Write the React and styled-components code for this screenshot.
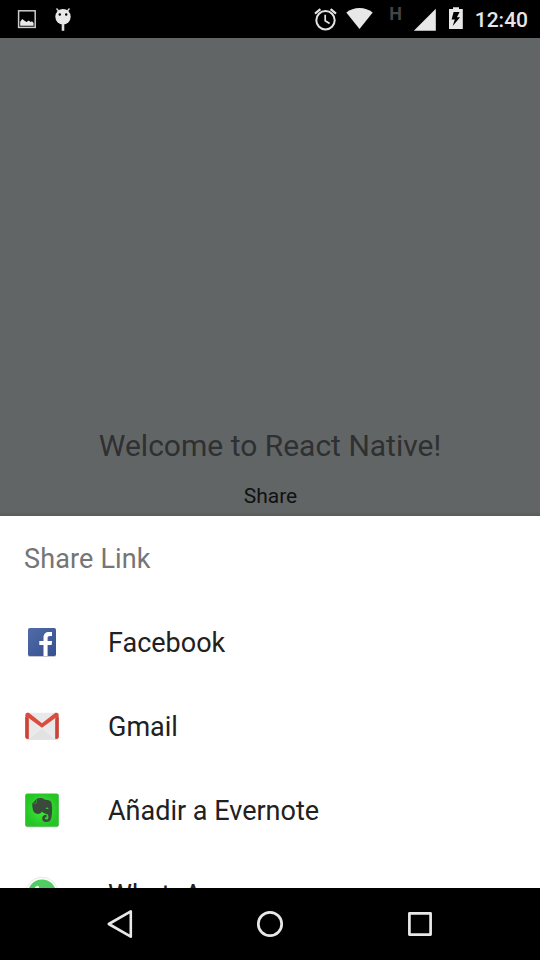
import React from "react";
import styled, { createGlobalStyle } from "styled-components";

const GlobalStyle = createGlobalStyle`
  * { box-sizing: border-box; }
  body { margin: 0; background: #000; font-family: Roboto, sans-serif; }
  svg { display: block; flex: none; }
`;

const Screen = styled.div`
  display: flex;
  flex-direction: column;
  width: 540px;
  height: 960px;
  overflow: hidden;
  background: #626566;
`;

const StatusBar = styled.header`
  display: flex;
  flex: none;
  justify-content: space-between;
  height: 38px;
  padding: 0 12px 0 15px;
  background: #000;
`;

const StatusGroup = styled.div`
  display: flex;
  align-items: center;
  gap: ${(p) => p.$gap}px;
`;

const Clock = styled.time`
  color: #e6e6e6;
  font-size: 21px;
  font-weight: 500;
  line-height: 38px;
  margin-left: 4px;
  padding-top: 2px;
`;

const Network = styled.span`
  align-self: flex-start;
  width: 24px;
  margin-right: -4px;
  margin-left: 4px;
  padding: 4px 4px 0 0;
  text-align: center;
  color: #444;
  font-size: 18px;
  font-weight: 700;
  line-height: 20px;
`;

const Content = styled.main`
  display: flex;
  flex-direction: column;
  flex: none;
  align-items: center;
  justify-content: flex-end;
  height: 478px;
  background: linear-gradient(#626566 474px, #585b5c 478px);
`;

const Title = styled.h1`
  margin: 0 0 20px;
  color: #2e3031;
  font-size: 30px;
  font-weight: 400;
  line-height: 36px;
`;

const ShareAction = styled.div`
  margin-bottom: 7px;
  padding-left: 1px;
  color: #101111;
  font-size: 21px;
  line-height: 25px;
`;

const Sheet = styled.section`
  flex: none;
  height: 372px;
  overflow: hidden;
  background: #fff;
`;

const SheetTitle = styled.h2`
  height: 84px;
  margin: 0;
  padding-left: 24px;
  color: #757575;
  font-size: 27px;
  font-weight: 400;
  letter-spacing: 0.15px;
  line-height: 86px;
`;

const Target = styled.div`
  display: flex;
  align-items: center;
  gap: 48px;
  height: 84px;
  padding-left: 24px;
`;

const TargetName = styled.span`
  color: #212121;
  font-size: 27px;
  line-height: 34px;
  padding-top: 1px;
`;

const NavBar = styled.nav`
  display: flex;
  flex: none;
  align-items: center;
  justify-content: center;
  gap: 114px;
  height: 72px;
  background: #000;
`;

const PictureIcon = () => (
  <svg width="24" height="38" viewBox="15 0 24 38">
    <rect x="18.6" y="10.8" width="16.6" height="16.6" fill="none" stroke="#ccc" strokeWidth="1.5" />
    <path d="M20.2 25.7v-4l2-2.7 2.4 1.8 1.8 1.2 2.4-1.6 1.8 1.6 1.4-.8 1.6 1.8v2.7z" fill="#e8e8e8" />
  </svg>
);

const DebugIcon = () => (
  <svg width="20" height="38" viewBox="53 0 20 38">
    <path d="M56.5 8.5l3 3.5M69.5 8.5l-3 3.5" stroke="#ddd" strokeWidth="1.4" />
    <circle cx="63" cy="16.8" r="7.7" fill="#e8e8e8" />
    <path d="M63 24v6.8" stroke="#ddd" strokeWidth="2.6" />
    <circle cx="59.8" cy="14.5" r="1.2" />
    <circle cx="66.2" cy="14.5" r="1.2" />
  </svg>
);

const AlarmIcon = () => (
  <svg width="26" height="38" viewBox="312 0 26 38" fill="none" stroke="#e4e4e4">
    <circle cx="325.5" cy="20.2" r="9.2" strokeWidth="2" />
    <path d="M325.2 14.8v6l4.4 2.7" strokeWidth="1.7" />
    <path d="M315 13.6l5.4-4.4M336 13.6l-5.4-4.4" strokeWidth="2.2" />
  </svg>
);

const WifiIcon = () => (
  <svg width="30" height="38" viewBox="345 0 30 38">
    <path d="M346.3 12.6Q352 8 359.5 8t13.2 4.6L359.5 29z" fill="#e8e8e8" />
  </svg>
);

const SignalIcon = () => (
  <svg width="28" height="38" viewBox="413 0 28 38">
    <path d="M435.8 8.7v22.1h-22z" fill="#e8e8e8" />
  </svg>
);

const BatteryIcon = () => (
  <svg width="16" height="38" viewBox="448 0 16 38">
    <path d="M453 9V7.2h6V9h3.8v20H449V9z" fill="#e8e8e8" />
    <path d="M459.6 12h-6l-2 7.4h3.2l-2.1 6.6 7.4-8.7h-3.2z" />
  </svg>
);

const FacebookIcon = () => (
  <svg width="36" height="36" viewBox="0 0 36 36">
    <defs>
      <linearGradient id="facebookBlue" x1="0" y1="0" x2="1" y2="1">
        <stop stopColor="#506ca8" />
        <stop offset="1" stopColor="#37508f" />
      </linearGradient>
    </defs>
    <rect x="4" y="5" width="28" height="28" rx="1.8" fill="#c7c9cf" />
    <rect x="4" y="4" width="28" height="28" rx="1.8" fill="url(#facebookBlue)" />
    <path d="M19.5 32V21h-4.2v-4h4.2v-3.2c0-3.9 2.1-5.8 5.5-5.8h3v3.9h-2c-1.9 0-2.4.8-2.4 2.4V17h4.5l-.5 4h-4v11z" fill="#fff" />
  </svg>
);

const GmailIcon = () => (
  <svg width="36" height="36" viewBox="0 0 36 36">
    <rect x="1.6" y="5.4" width="33" height="26" rx="1.8" fill="#c9c9c9" />
    <rect x="1.6" y="4.8" width="33" height="26" rx="1.8" fill="#e9e9e9" />
    <path d="M5 30.8l13-11 13 11z" fill="#e2e2e2" />
    <path d="M18 19.8L5 30.8M18 19.8l13 11" stroke="#f0f0f0" strokeWidth=".7" />
    <path d="M1.4 6.8q0-2 2-2h1.4L18 15.2 31.4 4.8h1.2q2 0 2 2v22q0 2-2 2h-1.2V10L18 19.8 4.6 10v20.8H3.4q-2 0-2-2z" fill="#db4b3f" />
    <path d="M1.4 9v20q0 1.8 2 1.8h1.2V11zM34.6 9v20q0 1.8-2 1.8h-1.2V11z" fill="#cb4338" />
  </svg>
);

const EvernoteIcon = () => (
  <svg width="36" height="36" viewBox="0 0 36 36">
    <defs>
      <radialGradient id="evernoteGreen">
        <stop stopColor="#40ed38" />
        <stop offset="1" stopColor="#25c526" />
      </radialGradient>
    </defs>
    <rect x="1.3" y="2" width="33.4" height="33.2" rx="2" fill="#aabdac" />
    <rect x="1.3" y="1.5" width="33.4" height="33" rx="2" fill="url(#evernoteGreen)" />
    <path d="M8.2 11.4L12.8 6.7q2-1 4.6-.7 2.2.2 3 1.5l4.3.7q2.5.5 2.9 3.2.8 4.4.4 9.2-.2 5.6-1.8 7.9-1.2 1.6-4.1 1.4-4-.2-3.9-3.5 0-3.6 4.3-3.6v2.5q-1.8 0-1.7 1.2.1 1.1 1.7 1.1 2 0 2-3.2 0-2.4-2.6-2.7-3.2-.3-3.8-2.2-1.2 2.6-4 2.4-4.1-.2-5-3.3-1-3-.9-7.2z" fill="#3b493d" />
    <path d="M9.2 11.2h2.9q.5 0 .5-.6V7.4" fill="none" stroke="#38b839" strokeWidth=".6" />
    <path d="M21.6 16.9q.4-1.4 1.6-1.3 1.2.2 1.4 1.7-1.5-.6-3-.4z" fill="#30d72e" />
  </svg>
);

const WhatsAppIcon = () => (
  <svg width="36" height="36" viewBox="0 0 36 36">
    <circle cx="18" cy="17.3" r="16.2" fill="#fcfcfc" stroke="#e7e9e7" />
    <circle cx="18" cy="17.5" r="14" fill="#50cc61" />
    <path d="M11.2 11l2-1.2 1.2.3 1.6 3.8-1.5 2q2 3.5 5.5 4.7l2-2 4 2-1.2 3.3q-5 2.5-10.8-3.6-4.4-5-2.8-9z" fill="#fff" />
  </svg>
);

const BackIcon = () => (
  <svg width="36" height="36" viewBox="0 0 36 36">
    <path d="M28.8 5.3v25.4L6.8 18z" fill="none" stroke="#e8e8e8" strokeWidth="2.6" strokeLinejoin="round" />
  </svg>
);

const HomeIcon = () => (
  <svg width="36" height="36" viewBox="0 0 36 36">
    <circle cx="18" cy="18" r="11.7" fill="none" stroke="#e8e8e8" strokeWidth="2.7" />
  </svg>
);

const RecentsIcon = () => (
  <svg width="36" height="36" viewBox="0 0 36 36">
    <rect x="7.4" y="7.4" width="21.2" height="21.2" fill="none" stroke="#e8e8e8" strokeWidth="2.7" strokeLinejoin="round" />
  </svg>
);

const targets = [
  { name: "Facebook", Icon: FacebookIcon },
  { name: "Gmail", Icon: GmailIcon },
  { name: "Añadir a Evernote", Icon: EvernoteIcon },
  { name: "WhatsApp", Icon: WhatsAppIcon },
];

export default function App() {
  return (
    <Screen>
      <GlobalStyle />
      <StatusBar>
        <StatusGroup $gap={14}>
          <PictureIcon />
          <DebugIcon />
        </StatusGroup>
        <StatusGroup $gap={7}>
          <AlarmIcon />
          <WifiIcon />
          <Network>H</Network>
          <SignalIcon />
          <BatteryIcon />
          <Clock>12:40</Clock>
        </StatusGroup>
      </StatusBar>
      <Content>
        <Title>Welcome to React Native!</Title>
        <ShareAction>Share</ShareAction>
      </Content>
      <Sheet>
        <SheetTitle>Share Link</SheetTitle>
        {targets.map(({ name, Icon }) => (
          <Target key={name}>
            <Icon />
            <TargetName>{name}</TargetName>
          </Target>
        ))}
      </Sheet>
      <NavBar>
        <BackIcon />
        <HomeIcon />
        <RecentsIcon />
      </NavBar>
    </Screen>
  );
}
